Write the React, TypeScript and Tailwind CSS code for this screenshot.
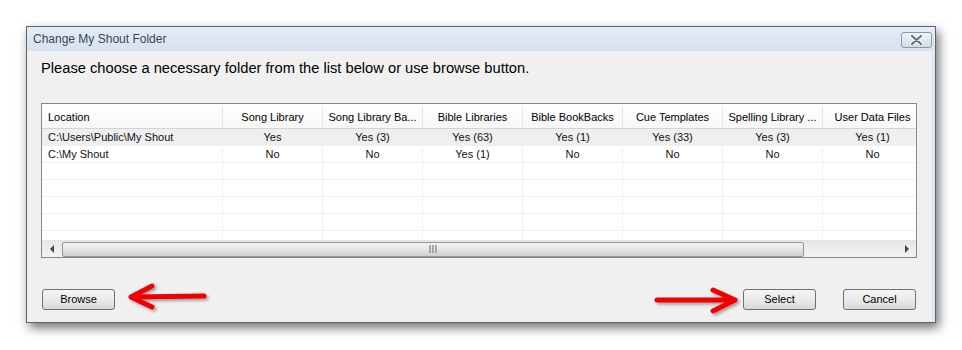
import React from "react";

const cols = [
  "Song Library",
  "Song Library Ba...",
  "Bible Libraries",
  "Bible BookBacks",
  "Cue Templates",
  "Spelling Library ...",
  "User Data Files",
];

const rows: { loc: string; vals: string[] }[] = [
  { loc: "C:\\Users\\Public\\My Shout", vals: ["Yes", "Yes (3)", "Yes (63)", "Yes (1)", "Yes (33)", "Yes (3)", "Yes (1)"] },
  { loc: "C:\\My Shout", vals: ["No", "No", "Yes (1)", "No", "No", "No", "No"] },
  { loc: "", vals: ["", "", "", "", "", "", ""] },
  { loc: "", vals: ["", "", "", "", "", "", ""] },
  { loc: "", vals: ["", "", "", "", "", "", ""] },
  { loc: "", vals: ["", "", "", "", "", "", ""] },
  { loc: "", vals: ["", "", "", "", "", "", ""] },
];

function Btn({ label }: { label: string }) {
  return (
    <div className="w-[73px] h-[21px] rounded-[3px] border border-[#707070] bg-gradient-to-b from-[#f4f4f4] via-[#ebebeb] to-[#d8d8d8] flex items-center justify-center text-[11px] text-black">
      {label}
    </div>
  );
}

export default function App() {
  return (
    <div
      className="relative w-[962px] h-[350px] bg-white overflow-hidden pt-[26px] pl-[26px]"
      style={{ fontFamily: '"Liberation Sans", Arial, sans-serif' }}
    >
      <div className="w-[910px] h-[297px] border border-[#5c6570] bg-[#dfe8f2] flex flex-col shadow-[3px_5px_10px_rgba(0,0,0,0.55)]">
        {/* title bar */}
        <div className="h-[24px] flex items-center justify-between pl-[6px] pr-[3px] bg-gradient-to-b from-[#e4ecf6] to-[#d7e2ef]">
          <span className="text-[12px] text-[#3c4654] leading-none">Change My Shout Folder</span>
          <div className="w-[31px] h-[16px] mt-[1px] rounded-[3px] border border-[#8a98a8] bg-gradient-to-b from-[#eef3f9] to-[#d3dde9] flex items-center justify-center">
            <svg width="13" height="10" viewBox="0 0 13 10">
              <path d="M2 1 L11 9 M11 1 L2 9" stroke="#ffffff" strokeWidth="4" strokeLinecap="round" />
              <path d="M2 1 L11 9 M11 1 L2 9" stroke="#6a6f77" strokeWidth="2.2" strokeLinecap="round" />
            </svg>
          </div>
        </div>
        {/* body */}
        <div className="flex-1 mr-[3px] bg-[#f0f0f0] flex flex-col pl-[14px] pr-[15px]">
          <div className="mt-[8px] h-[18px] text-[14.7px] leading-[18px] text-black whitespace-nowrap">
            Please choose a necessary folder from the list below or use browse button.
          </div>
          {/* table */}
          <div className="mt-[26px] h-[155px] border border-[#828790] bg-white flex flex-col overflow-hidden">
            <div className="h-[25px] flex shrink-0 border-b border-[#d5d5d5] bg-gradient-to-b from-white to-[#f7f7f7] text-[11px] text-black pt-[2px]">
              <div className="w-[181px] shrink-0 border-r border-[#e5e5e5] flex items-center pl-[6px]">Location</div>
              {cols.map((c) => (
                <div key={c} className="w-[100px] shrink-0 border-r border-[#e5e5e5] flex items-center justify-center whitespace-nowrap">
                  {c}
                </div>
              ))}
            </div>
            <div className="flex-1 overflow-hidden">
              {rows.map((r, i) => (
                <div
                  key={i}
                  className={`h-[17px] flex border-b border-[#f0f0f0] text-[11px] text-[#111] pt-[1px] ${i === 0 ? "bg-[#efefef]" : "bg-white"}`}
                >
                  <div className="w-[181px] shrink-0 border-r border-[#f0f0f0] flex items-center pl-[6px] whitespace-nowrap">{r.loc}</div>
                  {r.vals.map((v, j) => (
                    <div key={j} className="w-[100px] shrink-0 border-r border-[#f0f0f0] flex items-center justify-center whitespace-nowrap">
                      {v}
                    </div>
                  ))}
                </div>
              ))}
            </div>
            {/* scrollbar */}
            <div className="h-[17px] shrink-0 flex items-center bg-gradient-to-b from-[#e8e8e8] to-[#f2f2f2] border-t border-[#e3e3e3]">
              <div className="w-[20px] h-full flex items-center justify-center">
                <svg width="5" height="8" viewBox="0 0 5 8"><path d="M4 0 L0 4 L4 8 Z" fill="#444" /></svg>
              </div>
              <div className="w-[742px] h-[15px] rounded-[2px] border border-[#979797] bg-gradient-to-b from-[#f4f4f4] via-[#e6e6e6] to-[#cfcfcf] flex items-center justify-center">
                <svg width="8" height="8" viewBox="0 0 8 8">
                  <path d="M1 0 V8 M4 0 V8 M7 0 V8" stroke="#6a6a6a" strokeWidth="1" />
                </svg>
              </div>
              <div className="flex-1" />
              <div className="w-[20px] h-full flex items-center justify-center">
                <svg width="5" height="8" viewBox="0 0 5 8"><path d="M1 0 L5 4 L1 8 Z" fill="#444" /></svg>
              </div>
            </div>
          </div>
          {/* buttons */}
          <div className="mt-[31px] flex items-center justify-between pl-[1px] pr-[1px]">
            <Btn label="Browse" />
            <div className="flex gap-[27px]">
              <Btn label="Select" />
              <Btn label="Cancel" />
            </div>
          </div>
        </div>
      </div>
      {/* annotation arrows */}
      <svg className="absolute left-0 top-0 pointer-events-none" width="962" height="350" viewBox="0 0 962 350">
        <defs>
          <filter id="sh" x="-20%" y="-50%" width="140%" height="200%">
            <feDropShadow dx="2" dy="2" stdDeviation="1.5" floodColor="#000" floodOpacity="0.35" />
          </filter>
        </defs>
        <g filter="url(#sh)" stroke="#f20000" strokeWidth="5" strokeLinecap="round" strokeLinejoin="round" fill="none">
          <path d="M204 296 L132 297" />
          <path d="M152 286 L131 297 L152 307" />
          <path d="M657 300 L733 300" />
          <path d="M713 290 L735 300 L713 311" />
        </g>
      </svg>
    </div>
  );
}
